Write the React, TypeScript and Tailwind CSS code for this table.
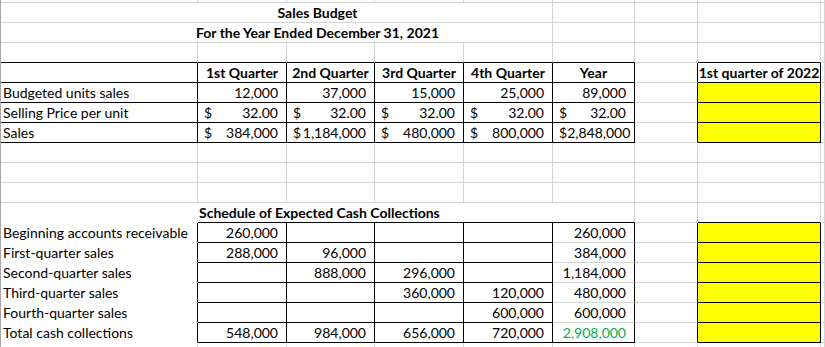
import React from 'react';

type Kind = 'l' | 'c' | 'r' | 'a';
type Cell = null | { k: Kind; v: string; b?: boolean; green?: boolean };

const E: Cell = null;
const l = (v: string): Cell => ({ k: 'l', v });
const h = (v: string): Cell => ({ k: 'c', v, b: true });
const n = (v: string, green = false): Cell => ({ k: 'r', v, green });
const a = (v: string): Cell => ({ k: 'a', v });

const data: Record<number, Cell[]> = {
  4: [E, h('1st Quarter'), h('2nd Quarter'), h('3rd Quarter'), h('4th Quarter'), h('Year'), E, h('1st quarter of 2022'), E],
  5: [l('Budgeted units sales'), n('12,000'), n('37,000'), n('15,000'), n('25,000'), n('89,000'), E, E, E],
  6: [l('Selling Price per unit'), a('32.00'), a('32.00'), a('32.00'), a('32.00'), a('32.00'), E, E, E],
  7: [l('Sales'), a('384,000'), a('1,184,000'), a('480,000'), a('800,000'), a('2,848,000'), E, E, E],
  12: [l('Beginning accounts receivable'), n('260,000'), E, E, E, n('260,000'), E, E, E],
  13: [l('First-quarter sales'), n('288,000'), n('96,000'), E, E, n('384,000'), E, E, E],
  14: [l('Second-quarter sales'), E, n('888,000'), n('296,000'), E, n('1,184,000'), E, E, E],
  15: [l('Third-quarter sales'), E, E, n('360,000'), n('120,000'), n('480,000'), E, E, E],
  16: [l('Fourth-quarter sales'), E, E, E, n('600,000'), n('600,000'), E, E, E],
  17: [l('Total cash collections'), n('548,000'), n('984,000'), n('656,000'), n('720,000'), n('2,908,000', true), E, E, E],
};

type B = 'g' | 'k' | 'w' | 'n';
const RB: Record<B, string> = {
  g: 'border-r border-r-[#d4d4d4]',
  k: 'border-r border-r-black',
  w: 'border-r border-r-white',
  n: '',
};
const BB: Record<B, string> = {
  g: 'border-b border-b-[#d4d4d4]',
  k: 'border-b border-b-black',
  w: 'border-b border-b-white',
  n: '',
};

function borders(r: number, c: number): [B, B] {
  let right: B = 'g';
  let bottom: B = 'g';
  if (r === 3) {
    if (c <= 5 || c === 7) bottom = 'k';
  } else if (r >= 4 && r <= 7) {
    if (c <= 5) { right = 'k'; bottom = 'k'; }
    else if (c === 6) { right = 'k'; }
    else if (c === 7) { right = 'k'; bottom = 'k'; }
  } else if (r === 11) {
    if (c === 0) { right = 'w'; bottom = 'w'; }
    if (c === 7) bottom = 'k';
  } else if (r >= 12 && r <= 17) {
    if (c === 0) { right = 'k'; bottom = 'w'; }
    else if (c <= 4) { right = 'k'; bottom = 'k'; }
    else if (c === 5) { right = 'k'; bottom = r === 17 ? 'k' : 'g'; }
    else if (c === 6) { right = 'k'; }
    else if (c === 7) { right = 'k'; bottom = 'k'; }
  } else if (r === 18) {
    bottom = 'n';
  }
  return [right, bottom];
}

function rowHeight(r: number) {
  if (r === 0) return 'h-[3px]';
  if (r === 18) return 'h-[5px]';
  return 'h-[20px]';
}

function Content({ cell }: { cell: Cell }) {
  if (!cell) return null;
  if (cell.k === 'l') return <span className="pl-[2px] whitespace-nowrap">{cell.v}</span>;
  if (cell.k === 'c')
    return <span className="w-full text-center font-bold whitespace-nowrap">{cell.v}</span>;
  if (cell.k === 'r')
    return (
      <span className={`w-full text-right pr-[8px] whitespace-nowrap ${cell.green ? 'text-[#00b050]' : ''}`}>
        {cell.v}
      </span>
    );
  return (
    <span className="w-full flex justify-between pl-[6px] pr-[8px] whitespace-nowrap">
      <span>$</span>
      <span>{cell.v}</span>
    </span>
  );
}

function GridCell({ r, c, cell }: { r: number; c: number; cell: Cell }) {
  const [rt, bt] = borders(r, c);
  const yellow = c === 7 && ((r >= 5 && r <= 7) || (r >= 12 && r <= 17));
  return (
    <div
      className={`${rowHeight(r)} ${RB[rt]} ${BB[bt]} ${yellow ? 'bg-[#ffff00]' : 'bg-white'} flex items-stretch leading-[19px] overflow-visible`}
    >
      <Content cell={cell} />
    </div>
  );
}

function PlainRow({ r }: { r: number }) {
  const cells = data[r] ?? [E, E, E, E, E, E, E, E, E];
  return (
    <>
      {cells.map((cell, c) => (
        <GridCell key={`${r}-${c}`} r={r} c={c} cell={cell} />
      ))}
    </>
  );
}

function TitleRow({ r, text }: { r: number; text: string }) {
  return (
    <>
      <div className="col-span-5 h-[20px] border-r border-r-[#d4d4d4] border-b border-b-[#d4d4d4] bg-white leading-[19px] pl-[82px] text-center font-bold whitespace-nowrap">
        {text}
      </div>
      {[5, 6, 7, 8].map((c) => (
        <GridCell key={`${r}-${c}`} r={r} c={c} cell={E} />
      ))}
    </>
  );
}

function ScheduleRow() {
  return (
    <>
      <GridCell r={11} c={0} cell={E} />
      <div className="col-span-5 h-[20px] border-r border-r-[#d4d4d4] border-b border-b-black bg-white leading-[19px] pl-[1px] font-bold whitespace-nowrap">
        Schedule of Expected Cash Collections
      </div>
      {[6, 7, 8].map((c) => (
        <GridCell key={`11-${c}`} r={11} c={c} cell={E} />
      ))}
    </>
  );
}

export default function App() {
  const rows: React.ReactNode[] = [];
  for (let r = 0; r <= 18; r++) {
    if (r === 1) rows.push(<TitleRow key={r} r={1} text="Sales Budget" />);
    else if (r === 2) rows.push(<TitleRow key={r} r={2} text="For the Year Ended December 31, 2021" />);
    else if (r === 11) rows.push(<ScheduleRow key={r} />);
    else rows.push(<PlainRow key={r} r={r} />);
  }
  return (
    <div
      className="w-[825px] h-[347px] overflow-hidden bg-white text-black text-[14px]"
      style={{ fontFamily: 'Lato, "Open Sans", sans-serif' }}
    >
      <div className="grid grid-cols-[197px_89px_88px_89px_89px_82px_63px_123px_1fr] border-l border-l-[#a6a6a6]">
        {rows}
      </div>
    </div>
  );
}
